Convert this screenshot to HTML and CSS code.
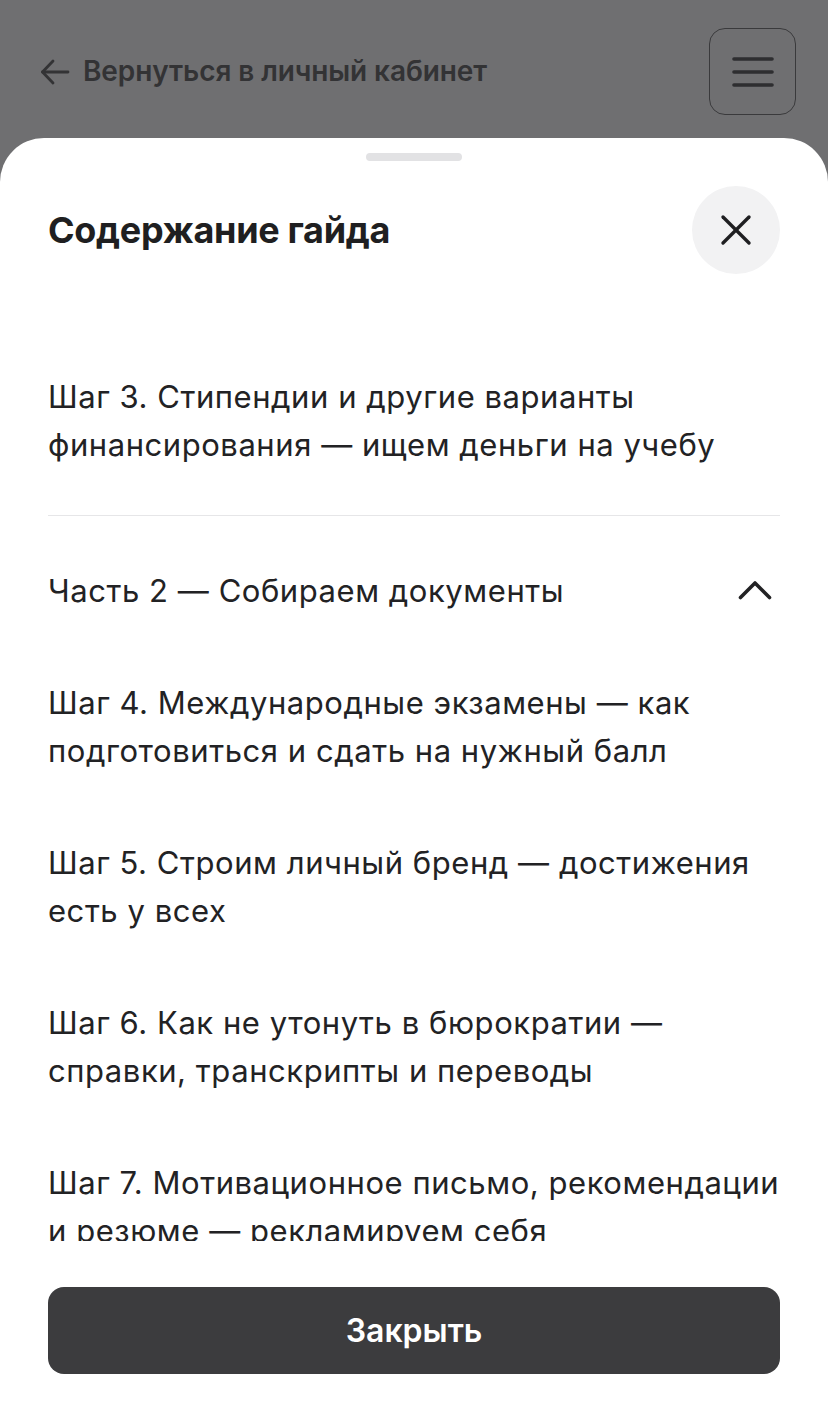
FILE: index.html
```html
<!DOCTYPE html>
<html lang="ru">
<head>
    <meta charset="UTF-8">
    <title>Содержание гайда</title>
    <link rel="stylesheet" href="styles.css">
</head>
<body>

<div class="page">
    <header class="topbar">
        <a class="back" href="#">
            <svg class="back-icon" width="30" height="26" viewBox="0 0 30 26" fill="none" stroke="currentColor" stroke-width="2.8" stroke-linecap="round" stroke-linejoin="round">
                <path d="M28 13H2.5"/>
                <path d="M13 2L2.5 13 13 24"/>
            </svg>
            <span>Вернуться в личный кабинет</span>
        </a>
        <button class="menu-btn" type="button">
            <svg width="42" height="30" viewBox="0 0 42 30" fill="none" stroke="currentColor" stroke-width="3.6" stroke-linecap="round">
                <path d="M2 2h38"/>
                <path d="M2 15h38"/>
                <path d="M2 28h38"/>
            </svg>
        </button>
    </header>

    <section class="sheet">
        <div class="handle"></div>

        <div class="sheet-head">
            <h2>Содержание гайда</h2>
            <button class="close-btn" type="button">
                <svg width="32" height="32" viewBox="0 0 32 32" fill="none" stroke="currentColor" stroke-width="3.4" stroke-linecap="round">
                    <path d="M3 3l26 26"/>
                    <path d="M29 3L3 29"/>
                </svg>
            </button>
        </div>

        <div class="toc">
            <div class="step last-in-part">Шаг 3. Стипендии и другие варианты финансирования — ищем деньги на учебу</div>

            <div class="part">
                <span>Часть 2 — Собираем документы</span>
                <svg width="34" height="22" viewBox="0 0 34 22" fill="none" stroke="currentColor" stroke-width="3.6" stroke-linecap="round" stroke-linejoin="round">
                    <path d="M2.5 18.5L17 4l14.5 14.5"/>
                </svg>
            </div>

            <div class="step">Шаг 4. Международные экзамены — как подготовиться и сдать на нужный балл</div>
            <div class="step">Шаг 5. Строим личный бренд — достижения есть у всех</div>
            <div class="step">Шаг 6. Как не утонуть в бюрократии — справки, транскрипты и переводы</div>
            <div class="step">Шаг 7. Мотивационное письмо, рекомендации и резюме — рекламируем себя</div>
        </div>

        <div class="sheet-foot">
            <button class="btn" type="button">Закрыть</button>
        </div>
    </section>
</div>

</body>
</html>
```

FILE: styles.css
```css
html, body {
    margin: 0;
    padding: 0;
}
body {
    font-family: Inter, "Noto Sans", sans-serif;
    background: #6f6f71;
    color: #1f1f21;
}
.page {
    height: 1421px;
    display: flex;
    flex-direction: column;
    overflow: hidden;
}
.topbar {
    height: 138px;
    flex-shrink: 0;
    display: flex;
    align-items: flex-start;
    justify-content: space-between;
    padding: 28px 32px 0 40px;
    box-sizing: border-box;
}
.back {
    display: flex;
    align-items: center;
    gap: 13px;
    height: 86px;
    color: #333335;
    text-decoration: none;
    font-size: 28px;
    font-weight: 600;
    letter-spacing: -0.1px;
}
.back-icon {
    margin-top: 1px;
}
.menu-btn {
    width: 87px;
    height: 87px;
    border: 1.5px solid #3a3a3c;
    border-radius: 16px;
    background: transparent;
    color: #2e2e30;
    display: flex;
    align-items: center;
    justify-content: center;
    padding: 0;
}
.sheet {
    flex: 1;
    display: flex;
    flex-direction: column;
    background: #fff;
    border-radius: 44px 44px 0 0;
    min-height: 0;
}
.handle {
    width: 96px;
    height: 8px;
    border-radius: 4px;
    background: #e2e2e4;
    margin: 15px auto 0;
    flex-shrink: 0;
}
.sheet-head {
    display: flex;
    align-items: center;
    justify-content: space-between;
    margin: 25px 48px 0;
    height: 88px;
    flex-shrink: 0;
}
.sheet-head h2 {
    margin: 0;
    font-size: 36px;
    font-weight: 700;
    letter-spacing: -0.3px;
    color: #1f1f21;
}
.close-btn {
    width: 88px;
    height: 88px;
    border-radius: 50%;
    border: none;
    background: #f2f2f3;
    color: #1f1f21;
    display: flex;
    align-items: center;
    justify-content: center;
    padding: 0;
}
.toc {
    flex: 1;
    min-height: 0;
    overflow: hidden;
    padding: 67px 48px 0;
    font-size: 31px;
    letter-spacing: 0.55px;
    line-height: 48px;
    color: #222224;
}
.step {
    padding: 32px 0;
}
.step.last-in-part {
    padding-bottom: 46px;
    border-bottom: 1.5px solid #e6e6e8;
}
.part {
    display: flex;
    align-items: center;
    justify-content: space-between;
    padding: 51px 8px 32px 0;
}
.part svg {
    margin-top: -2px;
}
.sheet-foot {
    flex-shrink: 0;
    padding: 46px 48px 47px;
}
.btn {
    width: 100%;
    height: 87px;
    border: none;
    border-radius: 16px;
    background: #3c3c3e;
    color: #fff;
    font-family: Inter, "Noto Sans", sans-serif;
    font-size: 32px;
    font-weight: 600;
}
```
